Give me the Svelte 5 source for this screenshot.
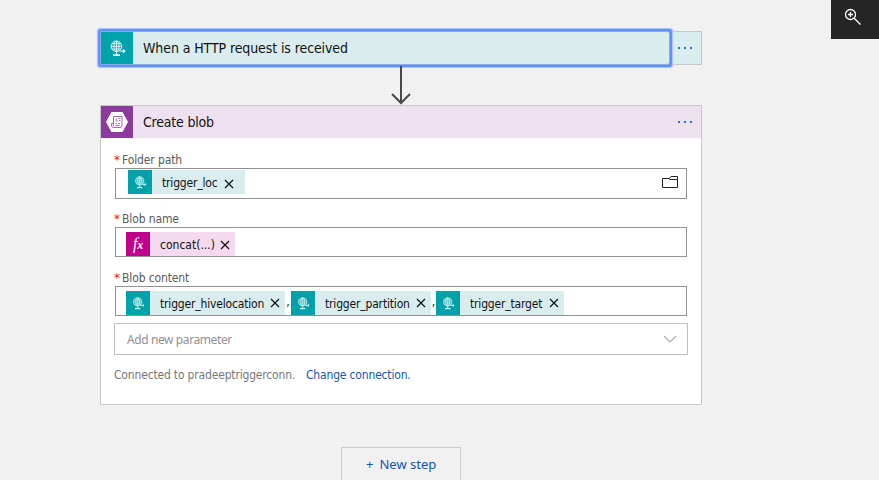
<script>
  const blobTokens = ['trigger_hivelocation', 'trigger_partition', 'trigger_target'];
  const widths = [159, 140, 128];
</script>

{#snippet globe(size)}
  <svg width={size} height={size} viewBox="0 0 16 16" fill="none" stroke="#e4f6f6" stroke-width="0.9">
    <circle cx="7" cy="6" r="5" />
    <ellipse cx="7" cy="6" rx="2.4" ry="5" />
    <path d="M2 6h10M2.800 3.500h8.400M2.800 8.500h8.400M7 1v13" />
    <path d="M3.800 14.200h6.400" stroke-width="1.700" />
    <path d="M10.500 10.400h4.300M13.200 8.800l1.700 1.600-1.700 1.600" stroke-width="1.200" />
  </svg>
{/snippet}

{#snippet cross()}
  <svg class="cross" width="10" height="10" viewBox="0 0 10 10"><path d="M1 1l8 8M9 1L1 9" stroke="#111" stroke-width="1.200" /></svg>
{/snippet}

{#snippet dots()}
  <span class="dots"><i></i><i></i><i></i></span>
{/snippet}

<main>
  <section class="trigger">
    <div class="focus">
      <div class="icon teal">{@render globe(17)}</div>
      <span class="title t1">When a HTTP request is received</span>
    </div>
    {@render dots()}
  </section>

  <svg class="arrow" width="24" height="39" viewBox="0 0 24 39" fill="none" stroke="#484848" stroke-width="2">
    <path d="M12 0v37M3 28l9 9 9-9" />
  </svg>

  <section class="card">
    <header>
      <div class="icon purple">
        <svg width="24" height="22" viewBox="0 0 24 22">
          <path d="M6.500 1h11l5.500 10-5.500 10h-11L1 11z" fill="#fff" />
          <g fill="none" stroke="#a765b5" stroke-width="1"><path d="M8.500 5.500h8.500v9a2 2 0 0 1-2 2H8.500a2 2 0 0 1-2-2v-2h2zM8.500 12v3" /><path d="M10.500 8h1.500M13.500 7.500h2M10.500 10h2M14 9.500h1.500M10.500 12.500h1.500M13 12.500h2M10.500 14.500h4" /></g>
        </svg>
      </div>
      <span class="title t2">Create blob</span>
      {@render dots()}
    </header>
    <div class="body">
      <div class="label l1"><b>*</b>Folder path</div>
      <div class="field first">
        <div class="token loc"><span class="ticon">{@render globe(13)}</span><span class="name">trigger_loc</span>{@render cross()}</div>
        <svg class="folder" width="16" height="12" viewBox="0 0 16 12" fill="none" stroke="#222"><path d="M.5 2.500h7L9 .5h6.500v11H.5zM7.500 3.500h8" /></svg>
      </div>
      <div class="label l2"><b>*</b>Blob name</div>
      <div class="field">
        <div class="token fx"><span class="ticon"><em>f<small>x</small></em></span><span class="name">concat(...)</span>{@render cross()}</div>
      </div>
      <div class="label l3"><b>*</b>Blob content</div>
      <div class="field">
        {#each blobTokens as token, i}
          {#if i}<span class="comma" class:tight={i === 2}>,</span>{/if}
          <div class="token" style="width:{widths[i]}px"><span class="ticon">{@render globe(13)}</span><span class="name">{token}</span>{@render cross()}</div>
        {/each}
      </div>
      <div class="param"><span>Add new parameter</span><svg width="14" height="8" viewBox="0 0 14 8" fill="none" stroke="#aaa" stroke-width="1.200"><path d="M1 1l6 6 6-6" /></svg></div>
      <div class="conn"><span>Connected to pradeeptriggerconn.</span><a href="#change">Change connection.</a></div>
    </div>
  </section>

  <button class="step"><span>+</span><span class="ns">New step</span></button>
  <div class="zoom">
    <svg width="18" height="18" viewBox="0 0 18 18" fill="none" stroke="#fff" stroke-width="1.300"><circle cx="6.500" cy="6.500" r="5" /><path d="M10.200 10.200l6.300 6.300M4 6.500h5M6.500 4v5" /></svg>
  </div>
</main>

<style>
  * { box-sizing: border-box; }
  main { position: relative; width: 879px; height: 480px; overflow: hidden; background: #f1f1f1; padding-left: 100px; font: 12px/16px "DejaVu Sans Condensed", "DejaVu Sans", sans-serif; font-stretch: condensed; letter-spacing: -0.17px; color: #111; display: flex; flex-direction: column; align-items: flex-start; }
  svg { display: block; flex: none; }
  .trigger { margin-top: 31px; width: 602px; height: 34px; border: 1px solid #c8c8c8; background: #d9ecee; display: flex; align-items: center; flex: none; }
  .focus { height: 32px; width: 568px; display: flex; align-items: center; box-shadow: 0 0 0 1px #8ba9e8, 0 0 0 3px #6290fb, 0 0 1px 4px #a9c2fa; border-radius: 1px; }
  .icon { width: 32px; height: 32px; display: flex; align-items: center; justify-content: center; flex: none; }
  .teal { background: #00a2a9; }
  .purple { background: #8c3a9e; }
  .title { font-size: 14px; margin-left: 10px; white-space: nowrap; letter-spacing: -0.1px; }
  .t2 { letter-spacing: -0.2px; }
  .dots { display: flex; gap: 4px; margin-left: auto; margin-right: 9px; }
  .dots i { width: 2px; height: 2px; background: #2873c9; }
  .arrow { margin-left: 289px; margin-top: 1px; }
  .card { width: 602px; height: 300px; background: #fff; border: 1px solid #c8c8c8; flex: none; }
  header { height: 32px; background: #eee1ef; display: flex; align-items: center; }
  .body { padding: 0 13px; }
  .label { height: 16px; color: #5a5a5a; margin: 14px 0 0; display: flex; white-space: nowrap; letter-spacing: -0.12px; }
  b { color: #e81123; width: 8px; font-size: 13px; font-weight: 400; letter-spacing: 0; }
  .field { margin-left: 1px; width: 572px; height: 30px; border: 1px solid #929292; padding: 4px 0 0 10px; display: flex; align-items: flex-start; }
  .field.first { height: 31px; padding: 1px 8px 0 12px; }
  .label.l2 { margin-top: 12px; }
  .label.l3 { margin-top: 13px; }
  .token { height: 24px; background: #d9ecee; display: flex; align-items: center; flex: none; white-space: nowrap; padding-right: 5px; }
  .token.loc { width: 117px; padding-right: 11px; }
  .token.fx { width: 109px; background: #f5daef; }
  .name { padding-top: 2px; }
  .loc .name { padding-top: 1px; }
  .loc .cross { margin-top: 3px; }
  .fx .name { letter-spacing: 0; }
  .fx .cross { margin-top: 2px; }
  .ticon { width: 24px; height: 24px; background: #00a2a9; display: flex; align-items: center; justify-content: center; margin-right: 10px; flex: none; }
  .fx .ticon { background: #c0008c; color: #fff; }
  em { font: italic 16px/20px "Liberation Serif", serif; }
  em small { font-size: 12px; font-weight: 700; }
  .cross { margin-left: auto; }
  .comma { width: 6px; text-align: center; padding-top: 3px; }
  .comma.tight { width: 5px; }
  .folder { margin: 6px 0 0 auto; }
  .param { margin-top: 7px; width: 574px; height: 32px; border: 1px solid #bdbdbd; display: flex; align-items: center; justify-content: space-between; padding: 0 10px 0 12px; color: #929292; font-family: "Noto Sans", sans-serif; letter-spacing: -0.4px; }
  .param span { padding-top: 2px; }
  .conn { margin-top: 12px; display: flex; color: #777; white-space: nowrap; }
  .conn span { width: 192px; }
  a { color: #0b57b7; text-decoration: none; }
  .step { margin: 42px 0 0 241px; width: 120px; height: 35px; border: 1px solid #ccc; background: none; color: #0b57b7; font: 13px/18px "Noto Sans", sans-serif; display: flex; align-items: center; padding: 0 0 2px 24px; gap: 6px; flex: none; }
  .zoom { position: absolute; right: 0; top: 0; width: 48px; height: 39px; background: #252525; padding: 8px 0 0 13px; }
</style>
